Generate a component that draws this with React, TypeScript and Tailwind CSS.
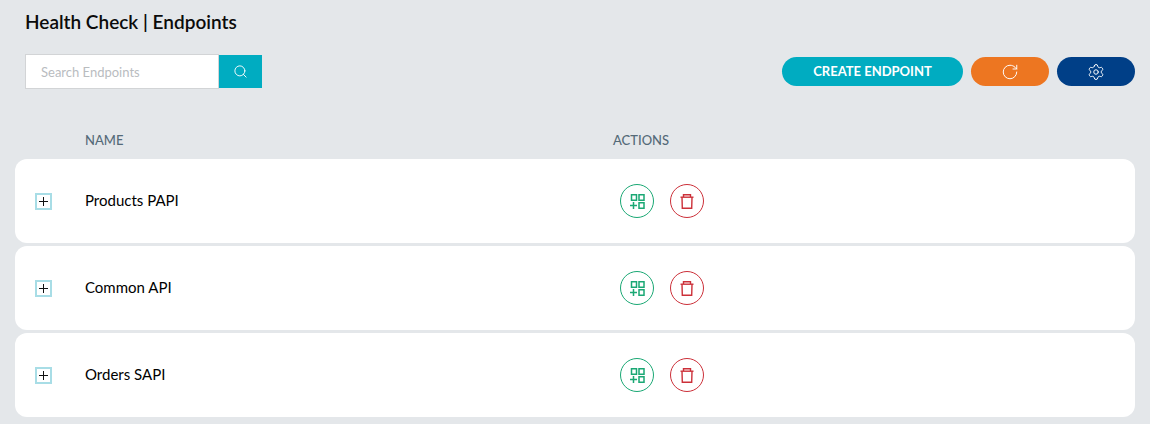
import { Search, RotateCw, Settings } from "lucide-react";

const rows = ["Products PAPI", "Common API", "Orders SAPI"];

function AddGrid() {
  return (
    <svg width="15" height="15" viewBox="0 0 15 15" fill="none" stroke="#1aa874" strokeWidth="1.5">
      <rect x="1.5" y="0.75" width="5" height="5.5" />
      <rect x="9" y="0.75" width="5" height="5.5" />
      <rect x="9" y="8.75" width="5" height="5.5" />
      <path d="M0 11.5h7M3.5 8v7" />
    </svg>
  );
}

function Trash() {
  return (
    <svg width="14" height="15" viewBox="0 0 14 15" fill="none" stroke="#cc3039" strokeWidth="1.4">
      <path d="M0.5 3.2h13" />
      <path d="M3.5 3V0.8h7V3" />
      <path d="M2 3.2l.3 11h9.4l.3-11" />
    </svg>
  );
}

export default function App() {
  return (
    <div className="h-[424px] w-[1150px] overflow-hidden bg-[#e4e7ea] font-['Lato',sans-serif]">
      <h1 className="ml-[25px] pt-[10px] text-[19px] leading-6 font-semibold text-[#0b0b0b]">Health Check | Endpoints</h1>
      <div className="mt-[20px] ml-[25px] mr-[15px] flex h-[35px] items-center justify-between">
        <div className="flex h-[35px] w-[237px] items-center">
          <div className="flex h-[35px] w-[194px] items-center border border-[#d2d4d6] bg-white pt-[2px] pl-[15px] text-[13px] text-[#b9bcbf]">
            Search Endpoints
          </div>
          <button className="flex h-[33px] w-[43px] items-center justify-center bg-[#00acc1] text-white">
            <Search size={15} strokeWidth={1.5} />
          </button>
        </div>
        <div className="flex items-center gap-2">
          <button className="flex h-[29px] w-[181px] items-center justify-center rounded-full bg-[#00acc1] text-[13px] font-bold text-white">
            CREATE ENDPOINT
          </button>
          <button className="flex h-[29px] w-[78px] items-center justify-center rounded-full bg-[#ed7621] text-white">
            <RotateCw size={18} strokeWidth={1.3} />
          </button>
          <button className="flex h-[29px] w-[78px] items-center justify-center rounded-full bg-[#003f87] text-white">
            <Settings size={18} strokeWidth={1.3} />
          </button>
        </div>
      </div>
      <div className="mt-[43px] flex h-[18px] items-center text-[13px] font-medium text-[#546a78]">
        <span className="ml-[85px] w-[528px]">NAME</span>
        <span>ACTIONS</span>
      </div>
      <div className="mx-[15px] mt-[9px] flex flex-col gap-[3px]">
        {rows.map((r) => (
          <div key={r} className="flex h-[84px] items-center rounded-xl bg-white">
            <div className="ml-5 flex h-[17px] w-[17px] items-center justify-center border-2 border-[#a8dde6]">
              <svg width="9" height="9" viewBox="0 0 9 9" stroke="#111" strokeWidth="1" fill="none">
                <path d="M0 4.5h9M4.5 0v9" />
              </svg>
            </div>
            <div className="ml-[33px] w-[535px] pb-[2px] text-[15px] text-black">{r}</div>
            <div className="flex gap-4">
              <button className="flex h-[34px] w-[34px] items-center justify-center rounded-full border border-[#1aa874]">
                <AddGrid />
              </button>
              <button className="flex h-[34px] w-[34px] items-center justify-center rounded-full border border-[#cc3039]">
                <Trash />
              </button>
            </div>
          </div>
        ))}
      </div>
    </div>
  );
}
